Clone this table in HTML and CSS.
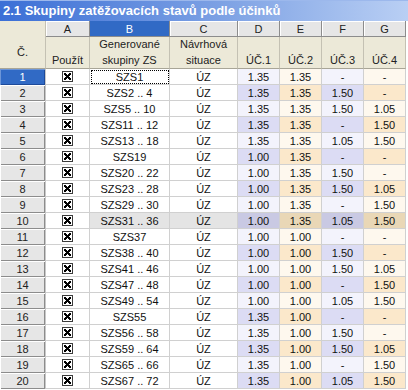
FILE: index.html
```html
<!DOCTYPE html>
<html lang="cs">
<head>
<meta charset="utf-8">
<title>Skupiny zatěžovacích stavů podle účinků</title>
<link rel="stylesheet" href="styles.css">
</head>
<body>
<div class="title">2.1 Skupiny zatěžovacích stavů podle účinků</div>
<div class="grid">
  <div class="corner">Č.</div>
  <div class="let">A</div>
  <div class="let sel">B</div>
  <div class="let">C</div>
  <div class="let">D</div>
  <div class="let">E</div>
  <div class="let">F</div>
  <div class="let">G</div>

  <div class="hd">Použít</div>
  <div class="hd">Generované<br>skupiny ZS</div>
  <div class="hd">Návrhová<br>situace</div>
  <div class="hd">ÚČ.1</div>
  <div class="hd">ÚČ.2</div>
  <div class="hd">ÚČ.3</div>
  <div class="hd">ÚČ.4</div>

  <div class="num cur">1</div><div class="c chk"><span class="box"></span></div><div class="c b focus">SZS1</div><div class="c">ÚZ</div><div class="c d">1.35</div><div class="c e">1.35</div><div class="c d">-</div><div class="c e">-</div>
  <div class="num">2</div><div class="c chk"><span class="box"></span></div><div class="c b">SZS2 .. 4</div><div class="c">ÚZ</div><div class="c d2">1.35</div><div class="c e2">1.35</div><div class="c d2">1.50</div><div class="c e2">-</div>
  <div class="num">3</div><div class="c chk"><span class="box"></span></div><div class="c b">SZS5 .. 10</div><div class="c">ÚZ</div><div class="c d">1.35</div><div class="c e">1.35</div><div class="c d">1.50</div><div class="c e">1.05</div>
  <div class="num">4</div><div class="c chk"><span class="box"></span></div><div class="c b">SZS11 .. 12</div><div class="c">ÚZ</div><div class="c d2">1.35</div><div class="c e2">1.35</div><div class="c d2">-</div><div class="c e2">1.50</div>
  <div class="num">5</div><div class="c chk"><span class="box"></span></div><div class="c b">SZS13 .. 18</div><div class="c">ÚZ</div><div class="c d">1.35</div><div class="c e">1.35</div><div class="c d">1.05</div><div class="c e">1.50</div>
  <div class="num">6</div><div class="c chk"><span class="box"></span></div><div class="c b">SZS19</div><div class="c">ÚZ</div><div class="c d2">1.00</div><div class="c e2">1.35</div><div class="c d2">-</div><div class="c e2">-</div>
  <div class="num">7</div><div class="c chk"><span class="box"></span></div><div class="c b">SZS20 .. 22</div><div class="c">ÚZ</div><div class="c d">1.00</div><div class="c e">1.35</div><div class="c d">1.50</div><div class="c e">-</div>
  <div class="num">8</div><div class="c chk"><span class="box"></span></div><div class="c b">SZS23 .. 28</div><div class="c">ÚZ</div><div class="c d2">1.00</div><div class="c e2">1.35</div><div class="c d2">1.50</div><div class="c e2">1.05</div>
  <div class="num">9</div><div class="c chk"><span class="box"></span></div><div class="c b">SZS29 .. 30</div><div class="c">ÚZ</div><div class="c d">1.00</div><div class="c e">1.35</div><div class="c d">-</div><div class="c e">1.50</div>
  <div class="num">10</div><div class="c chk"><span class="box"></span></div><div class="c b hl">SZS31 .. 36</div><div class="c hl">ÚZ</div><div class="c dh">1.00</div><div class="c eh">1.35</div><div class="c dh">1.05</div><div class="c eh">1.50</div>
  <div class="num">11</div><div class="c chk"><span class="box"></span></div><div class="c b">SZS37</div><div class="c">ÚZ</div><div class="c d">1.00</div><div class="c e">1.00</div><div class="c d">-</div><div class="c e">-</div>
  <div class="num">12</div><div class="c chk"><span class="box"></span></div><div class="c b">SZS38 .. 40</div><div class="c">ÚZ</div><div class="c d2">1.00</div><div class="c e2">1.00</div><div class="c d2">1.50</div><div class="c e2">-</div>
  <div class="num">13</div><div class="c chk"><span class="box"></span></div><div class="c b">SZS41 .. 46</div><div class="c">ÚZ</div><div class="c d">1.00</div><div class="c e">1.00</div><div class="c d">1.50</div><div class="c e">1.05</div>
  <div class="num">14</div><div class="c chk"><span class="box"></span></div><div class="c b">SZS47 .. 48</div><div class="c">ÚZ</div><div class="c d2">1.00</div><div class="c e2">1.00</div><div class="c d2">-</div><div class="c e2">1.50</div>
  <div class="num">15</div><div class="c chk"><span class="box"></span></div><div class="c b">SZS49 .. 54</div><div class="c">ÚZ</div><div class="c d">1.00</div><div class="c e">1.00</div><div class="c d">1.05</div><div class="c e">1.50</div>
  <div class="num">16</div><div class="c chk"><span class="box"></span></div><div class="c b">SZS55</div><div class="c">ÚZ</div><div class="c d2">1.35</div><div class="c e2">1.00</div><div class="c d2">-</div><div class="c e2">-</div>
  <div class="num">17</div><div class="c chk"><span class="box"></span></div><div class="c b">SZS56 .. 58</div><div class="c">ÚZ</div><div class="c d">1.35</div><div class="c e">1.00</div><div class="c d">1.50</div><div class="c e">-</div>
  <div class="num">18</div><div class="c chk"><span class="box"></span></div><div class="c b">SZS59 .. 64</div><div class="c">ÚZ</div><div class="c d2">1.35</div><div class="c e2">1.00</div><div class="c d2">1.50</div><div class="c e2">1.05</div>
  <div class="num">19</div><div class="c chk"><span class="box"></span></div><div class="c b">SZS65 .. 66</div><div class="c">ÚZ</div><div class="c d">1.35</div><div class="c e">1.00</div><div class="c d">-</div><div class="c e">1.50</div>
  <div class="num">20</div><div class="c chk"><span class="box"></span></div><div class="c b">SZS67 .. 72</div><div class="c">ÚZ</div><div class="c d2">1.35</div><div class="c e2">1.00</div><div class="c d2">1.05</div><div class="c e2">1.50</div>
</div>
</body>
</html>
```

FILE: styles.css
```css
* { box-sizing: border-box; }
body {
  margin: 0;
  background: #ffffff;
  font-family: "Liberation Sans", Arial, sans-serif;
  font-size: 11px;
  color: #000;
}
.title {
  height: 21px;
  padding-left: 3px;
  background: linear-gradient(to right, #3b6fd6 0%, #7ea2e4 55%, #b9cff4 100%);
  border-top: 1px solid #9cb8ec;
  color: #fff;
  font-weight: bold;
  font-size: 13px;
  line-height: 19px;
  white-space: nowrap;
}
.grid {
  display: grid;
  grid-template-columns: 46px 44px 80px 68px 42px 42px 42px 42px;
  grid-template-rows: 16px 32px;
  grid-auto-rows: 16px;
  width: 406px;
}
.corner {
  grid-row: span 2;
  background: #ece9d8;
  border-right: 1px solid #c4c1b3;
  border-bottom: 1px solid #a8a597;
  display: flex;
  align-items: flex-end;
  justify-content: center;
  padding-bottom: 10px;
  color: #222;
}
.let {
  background: #e6e6e6;
  border-right: 1px solid #8c8c8c;
  border-bottom: 1px solid #8c8c8c;
  box-shadow: inset 1px 1px #ffffff;
  display: flex;
  align-items: center;
  justify-content: center;
  color: #222;
}
.let.sel {
  background: #316ac5;
  color: #fff;
  box-shadow: none;
}
.hd {
  background: #ece9d8;
  border-right: 1px solid #c4c1b3;
  border-bottom: 1px solid #a8a597;
  display: flex;
  align-items: flex-end;
  justify-content: center;
  text-align: center;
  line-height: 16px;
  padding-bottom: 0;
  color: #222;
}
.num {
  background: #e6e6e6;
  border-right: 1px solid #c8c8c8;
  box-shadow: inset 1px 1px #ffffff, inset -1px -1px #8c8c8c;
  display: flex;
  align-items: center;
  justify-content: center;
  color: #222;
}
.num.cur {
  background: #316ac5;
  color: #fff;
  box-shadow: inset 1px 1px #6d96d8, inset -1px -1px #1d4a9a;
}
.c {
  border-right: 1px solid #d0d0d0;
  border-bottom: 1px solid #d0d0d0;
  display: flex;
  align-items: center;
  justify-content: center;
  background: #fff;
  color: #111;
  white-space: nowrap;
}
.c.focus { outline: 1px dotted #000; outline-offset: -2px; }
.d { background: #f3f3fc; }
.d2 { background: #dcdcf4; }
.e { background: #fef8ee; }
.e2 { background: #fbe8cb; }
.hl { background: #e4e4e4; }
.dh { background: #c9c9e3; }
.eh { background: #e9d7b6; }
.box {
  width: 11px;
  height: 11px;
  border: 1px solid #3c3c3c;
  background:
    linear-gradient(45deg, transparent 41%, #000 41%, #000 59%, transparent 59%),
    linear-gradient(-45deg, transparent 41%, #000 41%, #000 59%, transparent 59%),
    #fff;
  background-size: 7px 7px, 7px 7px, auto;
  background-position: center, center, 0 0;
  background-repeat: no-repeat;
}
```
